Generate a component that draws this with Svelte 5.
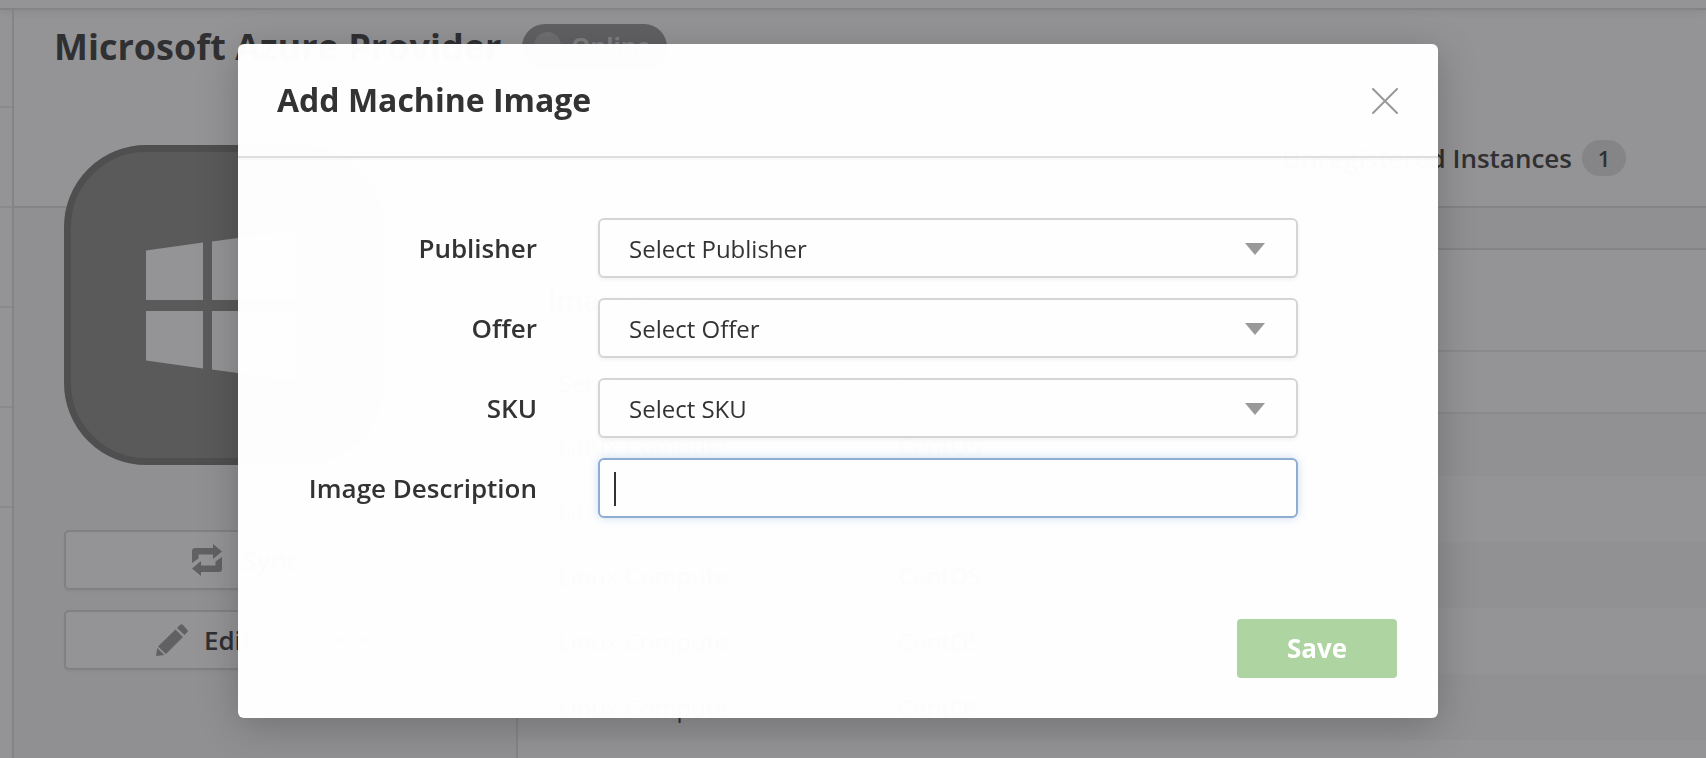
<script>
  const fields = [
    { id: 'publisher', label: 'Publisher', placeholder: 'Select Publisher' },
    { id: 'offer', label: 'Offer', placeholder: 'Select Offer' },
    { id: 'sku', label: 'SKU', placeholder: 'Select SKU' }
  ];
  const images = Array.from({ length: 5 }, () => ({ service: 'Linux Compute', image: 'CentOS' }));
  let description = $state('');
</script>

<div class="page">
  <div class="topbar"></div>
  <div class="body">
    <nav class="rail" aria-label="Sections">
      <span></span><span></span><span></span><span></span><span></span>
    </nav>
    <main>
      <header class="head">
        <div class="title-row">
          <h1>Microsoft Azure Provider</h1>
          <span class="status"><i></i>Online</span>
        </div>
        <div class="tabs">
          <a href="#instances">Unregistered Instances</a>
          <span class="count">1</span>
        </div>
      </header>
      <div class="columns">
        <aside>
          <div class="logo">
            <svg viewBox="0 0 306 306" aria-hidden="true">
              <path d="M75 98.500L132 90.500V148H75ZM141 89.500L226 78V148H141ZM75 159H132V216.500L75 208.500ZM141 159H226V229L141 217.500Z" fill="#949496" />
            </svg>
          </div>
          <button class="action sync" type="button">
            <svg width="30" height="32" viewBox="0 0 30 32" aria-hidden="true">
              <path d="M0 19V7Q0 4 3 4H21V0L30 7.500L21 15V10.500H6.500V14.500ZM30 13V25Q30 28 27 28H9V32L0 24.500L9 17V21.500H23.500V17.500Z" fill="#616163" />
            </svg>
            Sync
          </button>
          <div class="split">
            <button class="action edit" type="button">
              <svg width="32" height="32" viewBox="0 0 32 32" aria-hidden="true">
                <path d="M21 4L24 1Q25.500 -0.500 27 1L31 5.500Q32.500 7 31 8.500L28.500 11ZM19.500 5.500L27 13L10 30L2 22.500ZM1.200 24L8.500 31L0 32Z" fill="#616163" />
              </svg>
              Edit
            </button>
            <button class="action more" type="button" aria-label="More">
              <svg width="32" height="8" viewBox="0 0 32 8" aria-hidden="true">
                <g fill="#616163"><circle cx="4" cy="4" r="4" /><circle cx="16" cy="4" r="4" /><circle cx="28" cy="4" r="4" /></g>
              </svg>
            </button>
          </div>
        </aside>
        <section class="content">
          <div class="strip"></div>
          <h2>Images</h2>
          <table>
            <thead>
              <tr><th>Service</th><th>Image</th></tr>
            </thead>
            <tbody>
              {#each images as row}
                <tr><td>{row.service}</td><td>{row.image}</td></tr>
              {/each}
            </tbody>
          </table>
        </section>
      </div>
    </main>
  </div>
</div>

<div class="overlay">
  <form class="modal" role="dialog" aria-labelledby="dialog-title" onsubmit={(e) => e.preventDefault()}>
    <div class="modal-head">
      <h2 id="dialog-title">Add Machine Image</h2>
      <button class="close" type="button" aria-label="Close">
        <svg width="26" height="26" viewBox="0 0 26 26" aria-hidden="true">
          <path d="M1 1L25 25M25 1L1 25" fill="none" stroke="#999" stroke-width="2" stroke-linecap="round" />
        </svg>
      </button>
    </div>
    <div class="fields">
      {#each fields as field}
        <label for={field.id}>{field.label}</label>
        <div class="control">
          <select id={field.id}>
            <option>{field.placeholder}</option>
          </select>
          <svg class="arrow" width="20" height="12" viewBox="0 0 20 12" aria-hidden="true">
            <path d="M0 0H20L10 12Z" fill="#999" />
          </svg>
        </div>
      {/each}
      <label for="description">Image Description</label>
      <div class="control">
        <input id="description" type="text" bind:value={description} />
        {#if !description}<span class="caret"></span>{/if}
      </div>
    </div>
    <div class="modal-foot">
      <button class="save" type="submit">Save</button>
    </div>
  </form>
</div>

<style>
  :global(body) {
    margin: 0;
    background: #949496;
    overflow: hidden;
  }
  * {
    box-sizing: border-box;
  }
  .page,
  .overlay,
  button,
  select,
  input {
    font-family: 'Open Sans', sans-serif;
  }
  .page {
    display: flex;
    flex-direction: column;
    height: 100vh;
    overflow: hidden;
    background: #949496;
    color: #303032;
    font-size: 24px;
  }
  .topbar {
    flex: none;
    height: 10px;
    border-bottom: 2px solid #848486;
    box-shadow: 0 1px 8px rgba(0, 0, 0, 0.08);
  }
  .body {
    display: flex;
    flex: 1;
    min-height: 0;
  }
  .rail {
    flex: none;
    width: 14px;
    border-right: 2px solid #848486;
  }
  .rail span {
    display: block;
    height: 100px;
    border-bottom: 2px solid #8a8a8c;
  }
  .rail span:first-child {
    height: 98px;
  }
  main {
    flex: 1;
    display: flex;
    flex-direction: column;
    min-width: 0;
  }
  .head {
    flex: none;
    height: 198px;
    border-bottom: 2px solid #848486;
  }
  .title-row {
    display: flex;
    align-items: center;
    gap: 21px;
    height: 74px;
    padding-left: 40px;
  }
  h1 {
    margin: 0;
    font-size: 36px;
    line-height: 48px;
    font-weight: 700;
    white-space: nowrap;
  }
  .status {
    display: flex;
    align-items: center;
    gap: 10px;
    height: 46px;
    padding: 0 16px 4px 12px;
    border-radius: 23px;
    background: #616163;
    color: #808082;
    font-weight: 700;
  }
  .status i {
    width: 27px;
    height: 27px;
    border-radius: 50%;
    background: #6f6f71;
  }
  .tabs {
    display: flex;
    justify-content: flex-end;
    align-items: center;
    gap: 10px;
    height: 36px;
    margin: 56px 80px 0 0;
    font-size: 26px;
    font-weight: 600;
  }
  .tabs a {
    color: inherit;
    text-decoration: none;
  }
  .count {
    width: 44px;
    border-radius: 18px;
    background: #858587;
    font-size: 22px;
    line-height: 36px;
    text-align: center;
  }
  .columns {
    display: flex;
    flex: 1;
    min-height: 0;
  }
  aside {
    flex: none;
    display: flex;
    flex-direction: column;
    gap: 20px;
    width: 504px;
    padding: 0 132px 0 50px;
    border-right: 2px solid #848486;
    background: #909092;
  }
  .logo {
    flex: none;
    height: 320px;
    margin: -63px 0 45px;
    border: 7px solid #4f4f50;
    border-radius: 82px;
    background: #5a5a5b;
  }
  .logo svg {
    display: block;
  }
  .action {
    display: flex;
    flex: 1;
    align-items: center;
    justify-content: center;
    gap: 16px;
    min-height: 60px;
    max-height: 60px;
    padding: 0;
    border: 2px solid #818183;
    border-radius: 5px;
    background: #949496;
    box-shadow: 0 2px 2px rgba(0, 0, 0, 0.03);
    color: #303032;
    font-size: 26px;
    font-weight: 600;
  }
  .sync {
    gap: 20px;
    padding-left: 44px;
  }
  .split {
    display: flex;
  }
  .edit {
    padding-left: 20px;
    border-radius: 5px 0 0 5px;
    border-right: 0;
  }
  .more {
    flex: 0 0 62px;
    border-radius: 0 5px 5px 0;
  }
  .content {
    flex: 1;
    min-width: 0;
  }
  .strip {
    height: 42px;
    border-bottom: 2px solid #848486;
    background: #909092;
  }
  h2 {
    margin: 0;
  }
  .content h2 {
    padding-left: 30px;
    border-bottom: 2px solid #8a8a8c;
    font-size: 28px;
    line-height: 100px;
    font-weight: 600;
  }
  table {
    width: 100%;
    border-spacing: 0;
    table-layout: fixed;
  }
  th,
  td {
    height: 66px;
    padding: 0 0 0 40px;
    text-align: left;
    font-weight: 400;
  }
  th {
    height: 62px;
    border-bottom: 2px solid #8a8a8c;
    font-weight: 600;
  }
  th:first-child {
    width: 340px;
  }
  tbody tr:first-child td {
    height: 62px;
  }
  tbody tr:nth-child(odd) {
    background: #919193;
  }

  .overlay {
    position: fixed;
    inset: 0;
    padding: 44px 30px 40px 0;
    color: #333;
  }
  .modal {
    max-width: 1200px;
    margin: 0 auto;
    border-radius: 6px;
    background: rgba(255, 255, 255, 0.99);
    box-shadow: 0 8px 40px rgba(0, 0, 0, 0.22);
  }
  .modal-head {
    display: flex;
    align-items: center;
    justify-content: space-between;
    height: 114px;
    padding: 0 40px 0 39px;
    border-bottom: 2px solid #dedede;
    box-shadow: 0 2px 0 rgba(0, 0, 0, 0.02);
  }
  .modal-head h2 {
    font-size: 32px;
    line-height: 44px;
    font-weight: 700;
  }
  .close {
    display: flex;
    padding: 2px 0 0;
    border: 0;
    background: none;
  }
  .fields {
    display: grid;
    grid-template-columns: 299px 1fr;
    align-items: center;
    gap: 20px 61px;
    padding: 60px 140px 101px 0;
  }
  label {
    font-size: 26px;
    line-height: 36px;
    font-weight: 600;
    text-align: right;
  }
  .control {
    position: relative;
  }
  select,
  input {
    display: block;
    width: 100%;
    height: 60px;
    padding: 0 29px;
    border: 2px solid #d5d5d5;
    border-radius: 6px;
    background: #fefefe;
    box-shadow: 0 2px 4px rgba(0, 0, 0, 0.05);
    color: #333;
    font-size: 24px;
    appearance: none;
    outline: none;
  }
  input {
    padding: 0 14px;
    border-color: #8fadd3;
    box-shadow: 0 0 10px rgba(90, 145, 215, 0.3);
  }
  .arrow {
    position: absolute;
    top: 25px;
    right: 33px;
    pointer-events: none;
  }
  .caret {
    position: absolute;
    top: 14px;
    left: 16px;
    width: 2px;
    height: 34px;
    background: #333;
    pointer-events: none;
  }
  .modal-foot {
    display: flex;
    justify-content: flex-end;
    padding: 0 41px 40px;
  }
  .save {
    width: 160px;
    height: 59px;
    padding: 0 0 2px;
    border: 0;
    border-radius: 4px;
    background: #aed5a1;
    color: #fff;
    font-size: 26px;
    font-weight: 700;
  }
</style>
